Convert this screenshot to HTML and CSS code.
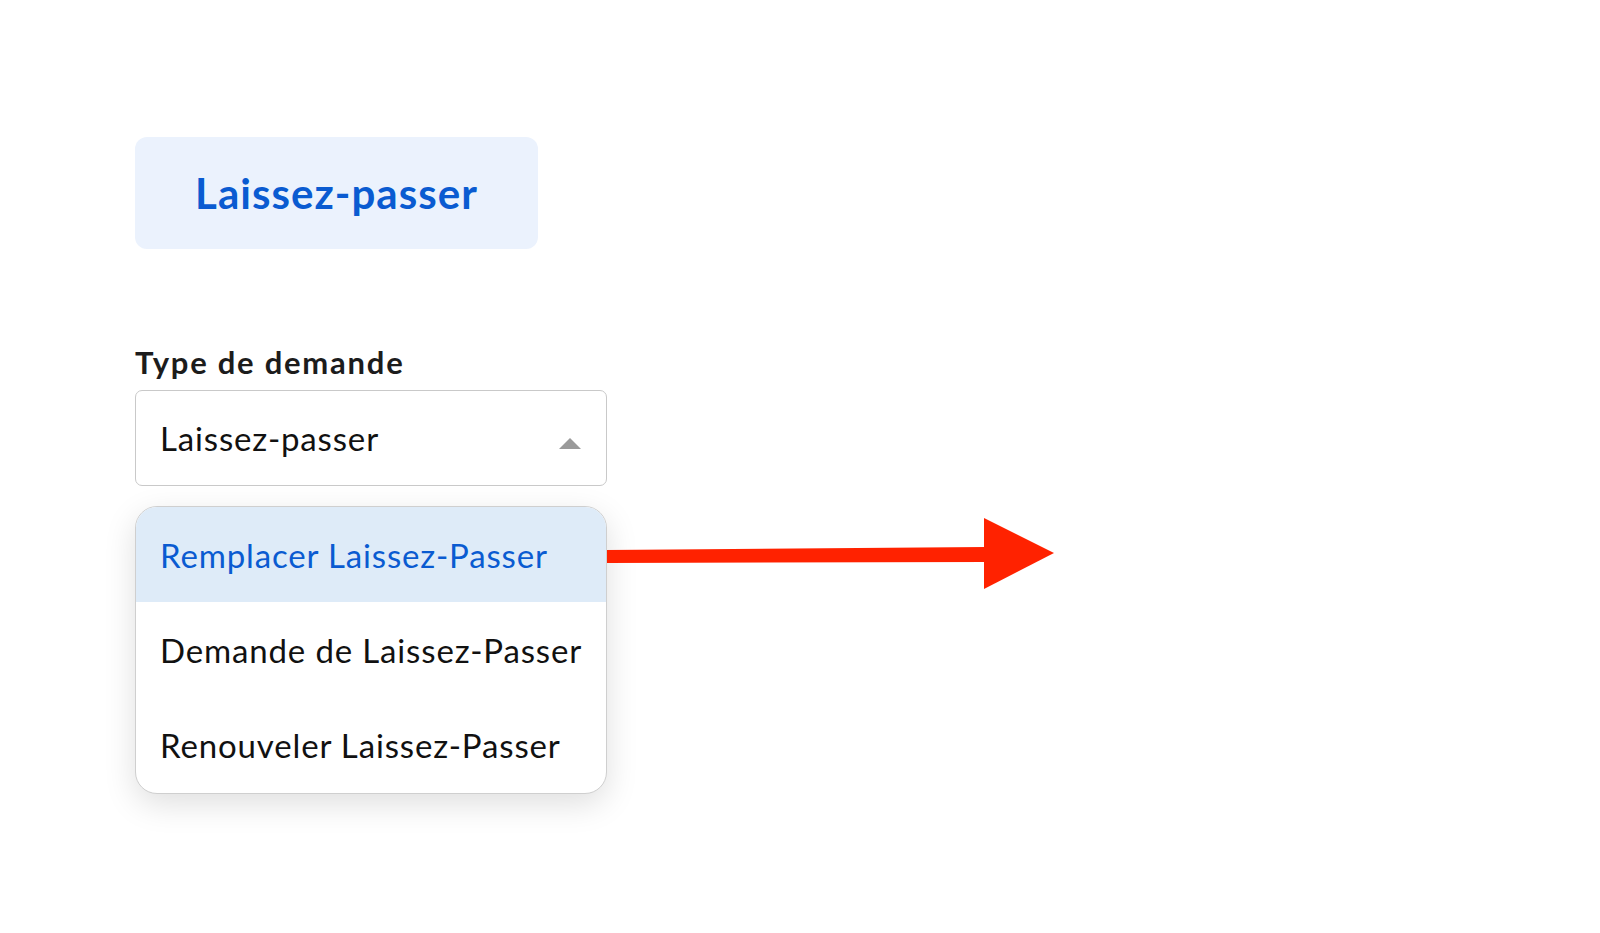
FILE: index.html
```html
<!DOCTYPE html>
<html lang="fr">
<head>
<meta charset="utf-8">
<title>Laissez-passer</title>
<link rel="stylesheet" href="styles.css">
</head>
<body>
<main class="page">
  <div class="badge">Laissez-passer</div>
  <section class="field">
    <label class="field-label">Type de demande</label>
    <div class="select">
      <span class="select-value">Laissez-passer</span>
      <span class="caret"></span>
    </div>
    <ul class="menu">
      <li class="menu-item is-active">Remplacer Laissez-Passer</li>
      <li class="menu-item">Demande de Laissez-Passer</li>
      <li class="menu-item">Renouveler Laissez-Passer</li>
    </ul>
  </section>
  <svg class="annotation" width="460" height="90" viewBox="600 510 460 90" aria-hidden="true">
    <polygon points="607,550 985,547 985,562 607,563" fill="#ff2200"/>
    <polygon points="984,518 1054,553 984,589" fill="#ff2200"/>
  </svg>
</main>
</body>
</html>
```

FILE: styles.css
```css
html, body {
  margin: 0;
  padding: 0;
  background: #ffffff;
}
body {
  font-family: Lato, "Open Sans", "Liberation Sans", sans-serif;
  color: #1a1a1a;
}
.page {
  position: relative;
  padding: 137px 0 0 135px;
  min-height: 796px;
}
.badge {
  width: 403px;
  height: 112px;
  box-sizing: border-box;
  background: #ebf2fd;
  border-radius: 12px;
  display: flex;
  align-items: center;
  justify-content: center;
  color: #0a5bd1;
  font-weight: 700;
  font-size: 42px;
  letter-spacing: 1.05px;
}
.field {
  margin-top: 93px;
  width: 472px;
}
.field-label {
  display: block;
  font-weight: 700;
  font-size: 31px;
  letter-spacing: 1.75px;
  color: #1c1c1c;
  line-height: 40px;
  margin-bottom: 8px;
}
.select {
  box-sizing: border-box;
  height: 96px;
  border: 1.5px solid #c9c9c9;
  border-radius: 7px;
  display: flex;
  align-items: center;
  justify-content: space-between;
  padding: 0 25px 0 24px;
}
.select-value {
  font-size: 33px;
  letter-spacing: 0.85px;
  color: #111;
}
.caret {
  width: 0;
  height: 0;
  border-left: 11px solid transparent;
  border-right: 11px solid transparent;
  border-bottom: 11px solid #9a9a9a;
  margin-top: 10px;
}
.menu {
  list-style: none;
  margin: 20px 0 0 0;
  padding: 0;
  box-sizing: border-box;
  height: 288px;
  border: 1.5px solid #cfcfcf;
  border-radius: 22px;
  overflow: hidden;
  box-shadow: 0 10px 32px rgba(0, 0, 0, 0.13);
  background: #fff;
}
.menu-item {
  height: 95px;
  display: flex;
  align-items: center;
  padding: 0 0 0 24px;
  font-size: 33px;
  letter-spacing: 0.85px;
  color: #111;
}
.menu-item.is-active {
  background: #deebf8;
  color: #0a5bd1;
}
.annotation {
  position: absolute;
  left: 600px;
  top: 510px;
}
```
